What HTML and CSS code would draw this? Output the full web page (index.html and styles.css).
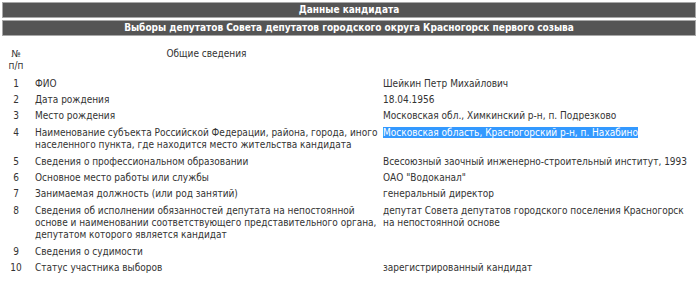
FILE: index.html
```html
<!DOCTYPE html>
<html lang="ru">
<head>
<meta charset="utf-8">
<link rel="stylesheet" href="styles.css">
</head>
<body>
<div class="page">
  <div class="bar">Данные кандидата</div>
  <div class="bar">Выборы депутатов Совета депутатов городского округа Красногорск первого созыва</div>
  <table class="info">
    <colgroup><col class="c-num"><col class="c-label"><col class="c-value"></colgroup>
    <thead>
      <tr><th class="num">№<br>п/п</th><th class="label-h">Общие сведения</th><th></th></tr>
    </thead>
    <tbody>
      <tr><td class="num">1</td><td>ФИО</td><td>Шейкин Петр Михайлович</td></tr>
      <tr><td class="num">2</td><td>Дата рождения</td><td>18.04.1956</td></tr>
      <tr><td class="num">3</td><td>Место рождения</td><td>Московская обл., Химкинский р-н, п. Подрезково</td></tr>
      <tr class="multi"><td class="num">4</td><td>Наименование субъекта Российской Федерации, района, города, иного населенного пункта, где находится место жительства кандидата</td><td><span class="sel">Московская область, Красногорский р-н, п. Нахабино</span></td></tr>
      <tr><td class="num">5</td><td>Сведения о профессиональном образовании</td><td>Всесоюзный заочный инженерно-строительный институт, 1993</td></tr>
      <tr><td class="num">6</td><td>Основное место работы или службы</td><td>ОАО "Водоканал"</td></tr>
      <tr><td class="num">7</td><td>Занимаемая должность (или род занятий)</td><td>генеральный директор</td></tr>
      <tr class="multi"><td class="num">8</td><td>Сведения об исполнении обязанностей депутата на непостоянной основе и наименовании соответствующего представительного органа, депутатом которого является кандидат</td><td>депутат Совета депутатов городского поселения Красногорск на непостоянной основе</td></tr>
      <tr><td class="num">9</td><td>Сведения о судимости</td><td></td></tr>
      <tr><td class="num">10</td><td>Статус участника выборов</td><td>зарегистрированный кандидат</td></tr>
    </tbody>
  </table>
</div>
</body>
</html>
```
FILE: styles.css
```css
html, body { margin: 0; padding: 0; background: #fff; }
body { font-family: "DejaVu Sans Condensed", "DejaVu Sans", sans-serif; font-size: 10px; color: #333; }
.page { padding: 2px; width: 694px; display: flex; flex-direction: column; gap: 2px; }
.bar {
  background: #555;
  border: 1px solid #a8a8a8;
  color: #fff;
  font-weight: bold;
  text-align: center;
  height: 14px;
  line-height: 14px;
}
.info { border-collapse: collapse; table-layout: fixed; width: 694px; margin-top: 8px; }
.c-num { width: 28px; }
.c-label { width: 353px; }
.c-value { width: 313px; }
.info th { font-weight: normal; vertical-align: top; padding: 2px 0 4px; line-height: 12px; }
.info th.label-h { text-align: center; }
.info td { padding: 2px 0 2px 5px; line-height: 12px; vertical-align: top; text-align: left; }
.info td:last-child { padding-left: 0; padding-right: 3px; }
.info .multi td { padding-top: 3px; padding-bottom: 3px; }
.info .num { text-align: center; padding-left: 0; padding-right: 0; }
.sel { background: #3399ff; color: #fff; }
```
